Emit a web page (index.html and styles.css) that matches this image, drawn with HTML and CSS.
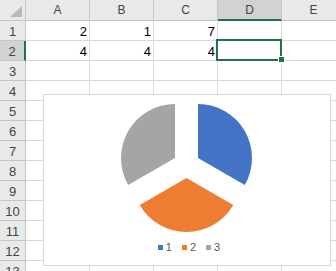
FILE: index.html
```html
<!DOCTYPE html>
<html lang="en">
<head>
  <meta charset="UTF-8">
  <title>Sheet1</title>
  <link rel="stylesheet" href="styles.css">
</head>
<body>
  <div class="sheet">
    <div class="grid">
      <div class="corner">
        <svg width="25" height="20" viewBox="0 0 25 20"><polygon points="10,17 22,17 22,6" fill="#b9b9b9"/></svg>
      </div>
      <div class="col-head">A</div>
      <div class="col-head">B</div>
      <div class="col-head">C</div>
      <div class="col-head active">D</div>
      <div class="col-head">E</div>

      <div class="row-head">1</div>
      <div class="cell">2</div><div class="cell">1</div><div class="cell">7</div><div class="cell"></div><div class="cell"></div>

      <div class="row-head active">2</div>
      <div class="cell">4</div><div class="cell">4</div><div class="cell">4</div><div class="cell"></div><div class="cell"></div>

      <div class="row-head">3</div>
      <div class="cell"></div><div class="cell"></div><div class="cell"></div><div class="cell"></div><div class="cell"></div>
      <div class="row-head">4</div>
      <div class="cell"></div><div class="cell"></div><div class="cell"></div><div class="cell"></div><div class="cell"></div>
      <div class="row-head">5</div>
      <div class="cell"></div><div class="cell"></div><div class="cell"></div><div class="cell"></div><div class="cell"></div>
      <div class="row-head">6</div>
      <div class="cell"></div><div class="cell"></div><div class="cell"></div><div class="cell"></div><div class="cell"></div>
      <div class="row-head">7</div>
      <div class="cell"></div><div class="cell"></div><div class="cell"></div><div class="cell"></div><div class="cell"></div>
      <div class="row-head">8</div>
      <div class="cell"></div><div class="cell"></div><div class="cell"></div><div class="cell"></div><div class="cell"></div>
      <div class="row-head">9</div>
      <div class="cell"></div><div class="cell"></div><div class="cell"></div><div class="cell"></div><div class="cell"></div>
      <div class="row-head">10</div>
      <div class="cell"></div><div class="cell"></div><div class="cell"></div><div class="cell"></div><div class="cell"></div>
      <div class="row-head">11</div>
      <div class="cell"></div><div class="cell"></div><div class="cell"></div><div class="cell"></div><div class="cell"></div>
      <div class="row-head">12</div>
      <div class="cell"></div><div class="cell"></div><div class="cell"></div><div class="cell"></div><div class="cell"></div>
      <div class="row-head">13</div>
      <div class="cell"></div><div class="cell"></div><div class="cell"></div><div class="cell"></div><div class="cell"></div>
    </div>

    <div class="selection"><span class="handle"></span></div>

    <div class="chart">
      <svg class="pie" width="286" height="143" viewBox="44 95 286 143">
        <path d="M198 158 L198 104 A54 54 0 0 1 244.77 185 Z" fill="#4472c4"/>
        <path d="M186.5 177.9 L233.27 204.9 A54 54 0 0 1 139.73 204.9 Z" fill="#ed7d31"/>
        <path d="M175 158 L128.23 185 A54 54 0 0 1 175 104 Z" fill="#a5a5a5"/>
      </svg>
      <div class="legend">
        <span class="key"><i class="swatch blue"></i>1</span>
        <span class="key"><i class="swatch orange"></i>2</span>
        <span class="key"><i class="swatch gray"></i>3</span>
      </div>
    </div>
  </div>
</body>
</html>
```

FILE: styles.css
```css
body {
  margin: 0;
  background: #fff;
  font-family: 'Liberation Sans', Arial, sans-serif;
  overflow: hidden;
}

.sheet {
  position: relative;
  width: 336px;
  height: 271px;
  overflow: hidden;
}

.grid {
  display: grid;
  grid-template-columns: 26px repeat(5, 64px);
  grid-template-rows: 21px repeat(13, 20px);
}

.grid > div {
  box-sizing: border-box;
}

.corner {
  background: #e9e9e9;
  border-right: 1px solid #c6c6c6;
  border-bottom: 1px solid #c6c6c6;
}

.corner svg {
  display: block;
}

.col-head {
  background: #e9e9e9;
  border-right: 1px solid #c6c6c6;
  border-bottom: 1px solid #c6c6c6;
  color: #444;
  font-size: 12px;
  line-height: 20px;
  text-align: center;
}

.col-head.active {
  background: #d2d2d2;
  border-bottom: 2px solid #217346;
}

.row-head {
  background: #e9e9e9;
  border-right: 1px solid #c6c6c6;
  border-bottom: 1px solid #c6c6c6;
  color: #444;
  font-size: 13px;
  line-height: 16px;
  padding-top: 3px;
  text-align: center;
}

.row-head.active {
  background: #d2d2d2;
  border-right: 2px solid #217346;
}

.cell {
  border-right: 1px solid #d9d9d9;
  border-bottom: 1px solid #d9d9d9;
  color: #000;
  font-size: 13px;
  line-height: 16px;
  padding: 3px 2px 0 0;
  text-align: right;
}

.selection {
  position: absolute;
  left: 216px;
  top: 39px;
  width: 66px;
  height: 22px;
  box-sizing: border-box;
  border: 2px solid #217346;
}

.handle {
  position: absolute;
  left: 61px;
  top: 16px;
  width: 5px;
  height: 5px;
  background: #217346;
  box-shadow: 0 0 0 1px #fff;
}

.chart {
  position: absolute;
  left: 43px;
  top: 94px;
  width: 288px;
  height: 172px;
  box-sizing: border-box;
  border: 1px solid #d9d9d9;
  background: #fff;
  display: flex;
  flex-direction: column;
}

.pie {
  display: block;
}

.legend {
  display: flex;
  justify-content: center;
  gap: 10px;
  padding: 2px 0 0 4px;
  font-size: 11px;
  line-height: 14px;
  color: #595959;
}

.key {
  display: flex;
  align-items: center;
  gap: 3px;
}

.swatch {
  display: inline-block;
  width: 5px;
  height: 5px;
}

.swatch.blue { background: #4472c4; }
.swatch.orange { background: #ed7d31; }
.swatch.gray { background: #a5a5a5; }
```
